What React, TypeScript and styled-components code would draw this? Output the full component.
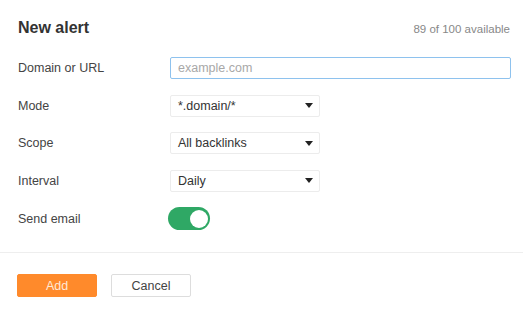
import styled, { createGlobalStyle } from "styled-components"

const GlobalStyle = createGlobalStyle`
    html, body {
        margin: 0;
        padding: 0;
        background: #ffffff;
    }
    body {
        font-family: "Liberation Sans", Arial, sans-serif;
        color: #333333;
    }
`

const Dialog = styled.div`
    width: 523px;
    height: 315px;
    background: #ffffff;
    display: flex;
    flex-direction: column;
    box-sizing: border-box;
`

const Header = styled.div`
    display: flex;
    justify-content: space-between;
    align-items: baseline;
    padding: 19px 13px 0 18px;
    height: 38px;
    box-sizing: border-box;
`

const Title = styled.h2`
    margin: 0;
    font-size: 16px;
    font-weight: bold;
    color: #333333;
`

const Quota = styled.span`
    font-size: 11.5px;
    color: #888888;
`

const Form = styled.div`
    display: flex;
    flex-direction: column;
    gap: 15.5px;
    padding: 19px 18px 0 18px;
    height: 214px;
    box-sizing: border-box;
`

const Row = styled.div`
    display: grid;
    grid-template-columns: 152px 1fr;
    align-items: center;
    height: 22px;
`

const Label = styled.label`
    font-size: 12.5px;
    color: #444444;
`

const TextInput = styled.input`
    width: 341px;
    height: 22px;
    box-sizing: border-box;
    border: 1px solid #8ec2ee;
    border-radius: 2px;
    padding: 0 7px;
    font-family: "Liberation Sans", Arial, sans-serif;
    font-size: 12.5px;
    color: #333333;
    outline: none;
    &::placeholder {
        color: #a8a8a8;
    }
`

const SelectBox = styled.div`
    width: 150px;
    height: 22px;
    box-sizing: border-box;
    border: 1px solid #ececec;
    border-radius: 2px;
    display: flex;
    align-items: center;
    justify-content: space-between;
    padding: 0 5px 0 7px;
    font-size: 12.5px;
    color: #333333;
`

const Caret = styled.span`
    width: 0;
    height: 0;
    border-left: 4px solid transparent;
    border-right: 4px solid transparent;
    border-top: 5px solid #222222;
    margin-right: 1px;
`

const Toggle = styled.div<{ $on: boolean }>`
    width: 42px;
    height: 23px;
    border-radius: 12px;
    background: ${p => (p.$on ? "#2fa865" : "#cccccc")};
    display: flex;
    align-items: center;
    justify-content: ${p => (p.$on ? "flex-end" : "flex-start")};
    padding: 0 2px;
    box-sizing: border-box;
    margin-left: -2px;
`

const Knob = styled.div`
    width: 18px;
    height: 18px;
    border-radius: 50%;
    background: #ffffff;
`

const Divider = styled.div`
    height: 1px;
    background: #eeeeee;
`

const Footer = styled.div`
    display: flex;
    gap: 14px;
    padding: 21px 17px 0 17px;
`

const Button = styled.button<{ $primary?: boolean }>`
    width: 80px;
    height: 23px;
    box-sizing: border-box;
    border-radius: 2px;
    font-family: "Liberation Sans", Arial, sans-serif;
    font-size: 12.5px;
    border: 1px solid ${p => (p.$primary ? "#ff8a2b" : "#dddddd")};
    background: ${p => (p.$primary ? "#ff8a2b" : "#ffffff")};
    color: ${p => (p.$primary ? "#ffe9d6" : "#444444")};
    padding: 0;
    cursor: pointer;
`

const selects = [
    { label: "Mode", value: "*.domain/*" },
    { label: "Scope", value: "All backlinks" },
    { label: "Interval", value: "Daily" },
]

const App = () => {
    return (
        <>
            <GlobalStyle />
            <Dialog>
                <Header>
                    <Title>New alert</Title>
                    <Quota>89 of 100 available</Quota>
                </Header>
                <Form>
                    <Row>
                        <Label>Domain or URL</Label>
                        <TextInput placeholder="example.com" />
                    </Row>
                    {selects.map(item => (
                        <Row key={item.label}>
                            <Label>{item.label}</Label>
                            <SelectBox>
                                <span>{item.value}</span>
                                <Caret />
                            </SelectBox>
                        </Row>
                    ))}
                    <Row>
                        <Label>Send email</Label>
                        <Toggle $on={true}>
                            <Knob />
                        </Toggle>
                    </Row>
                </Form>
                <Divider />
                <Footer>
                    <Button $primary>Add</Button>
                    <Button>Cancel</Button>
                </Footer>
            </Dialog>
        </>
    )
}

export default App
